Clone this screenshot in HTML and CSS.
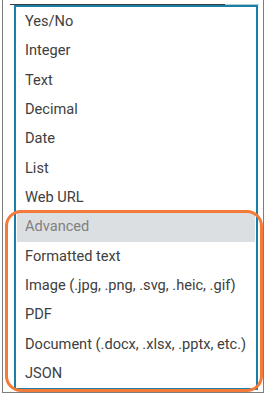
FILE: index.html
```html
<!DOCTYPE html>
<html>
<head>
<meta charset="utf-8">
<link rel="stylesheet" href="styles.css">
</head>
<body>
<div class="frame">
  <div class="topbar"><div class="topline"></div><div class="toptab"></div></div>
  <ul class="list">
    <li class="item">Yes/No</li>
    <li class="item">Integer</li>
    <li class="item">Text</li>
    <li class="item">Decimal</li>
    <li class="item">Date</li>
    <li class="item">List</li>
    <li class="item">Web URL</li>
    <li class="item group">Advanced</li>
    <li class="item">Formatted text</li>
    <li class="item">Image (.jpg, .png, .svg, .heic, .gif)</li>
    <li class="item">PDF</li>
    <li class="item">Document (.docx, .xlsx, .pptx, etc.)</li>
    <li class="item">JSON</li>
  </ul>
  <div class="highlight"></div>
</div>
</body>
</html>
```
FILE: styles.css
```css
html, body {
  margin: 0;
  padding: 0;
  background: #ffffff;
}
.frame {
  position: relative;
  box-sizing: border-box;
  margin-left: 2px;
  width: 262px;
  height: 393px;
  padding-top: 4px;
  border: 1px solid #7d7d7d;
  border-top: none;
  font-family: Roboto, "Liberation Sans", sans-serif;
}
.topbar {
  display: flex;
  margin-left: 7px;
  margin-right: 4px;
  height: 1px;
}
.topline {
  flex: 1;
  background: #3c3c3c;
}
.toptab {
  width: 34px;
  background: #a9cdd3;
}
.list {
  list-style: none;
  margin: 0 0 0 11px;
  padding: 0 1px;
  width: 244px;
  box-sizing: border-box;
  border: 2px solid #1b7ea4;
}
.item {
  height: 29.33px;
  line-height: 29.33px;
  padding-left: 8px;
  font-size: 14.6px;
  color: #404040;
  white-space: nowrap;
}
.group {
  background: #dcdfe2;
  color: #808080;
}
.highlight {
  position: absolute;
  left: 2px;
  top: 210px;
  width: 258px;
  height: 182px;
  box-sizing: border-box;
  border: 3px solid #f47a3a;
  border-radius: 16px;
  pointer-events: none;
}
```
